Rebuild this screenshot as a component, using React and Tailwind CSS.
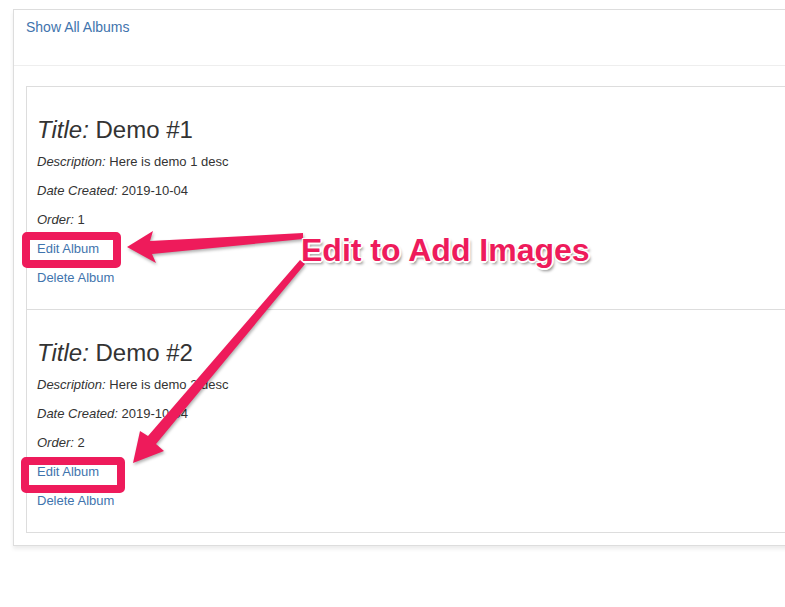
import React from "react";

const albums = [
  { id: 1, title: "Demo #1", desc: "Here is demo 1 desc", date: "2019-10-04", order: 1 },
  { id: 2, title: "Demo #2", desc: "Here is demo 2 desc", date: "2019-10-04", order: 2 },
];

const AlbumItem = ({ album, last }) => {
  return (
    <div
      className={`px-[10px] pt-[26px] pb-[17px] ${last ? "" : "border-b border-[#dddddd]"}`}
    >
      <h3 className="text-[24px] leading-[34px] text-[#333333]">
        <em>Title:</em> {album.title}
      </h3>
      <p className="text-[13px] leading-[29px] text-[#333333]">
        <em>Description:</em> {album.desc}
      </p>
      <p className="text-[13px] leading-[29px] text-[#333333]">
        <em>Date Created:</em> {album.date}
      </p>
      <p className="text-[13px] leading-[29px] text-[#333333]">
        <em>Order:</em> {album.order}
      </p>
      <div className="text-[13px] leading-[29px] text-[#3f74ad]">
        <a href="#">Edit Album</a>
      </div>
      <div className="text-[13px] leading-[29px] text-[#3f74ad]">
        <a href="#">Delete Album</a>
      </div>
    </div>
  );
};

const App = () => {
  return (
    <div
      className="relative w-full h-[607px] overflow-hidden bg-white"
      style={{ fontFamily: '"Liberation Sans", Arial, sans-serif' }}
    >
      {/* Panel */}
      <div className="ml-[13px] mt-[9px] w-[820px] border border-[#dddddd] bg-white shadow-[0_3px_4px_rgba(0,0,0,0.08)]">
        {/* Header */}
        <div className="h-[56px] px-[12px] pt-[5px] border-b border-[#eeeeee]">
          <a href="#" className="text-[14px] leading-[20px] text-[#3f74ad]">
            Show All Albums
          </a>
        </div>

        {/* Body */}
        <div className="px-[12px] pt-[20px] pb-[12px]">
          <div className="border border-[#dddddd]">
            {albums.map((album, i) => (
              <AlbumItem key={album.id} album={album} last={i === albums.length - 1} />
            ))}
          </div>
        </div>
      </div>

      {/* Annotation boxes */}
      <div className="absolute left-[22px] top-[232px] w-[99px] h-[36px] border-[8px] border-[#ee1b5b] rounded-[5px]" />
      <div className="absolute left-[21px] top-[457px] w-[104px] h-[36px] border-[8px] border-[#ee1b5b] rounded-[5px]" />

      {/* Arrows */}
      <svg
        className="absolute left-0 top-0 drop-shadow-[1px_2px_1.5px_rgba(0,0,0,0.3)]"
        width="785"
        height="607"
        viewBox="0 0 785 607"
      >
        <polygon
          points="127,247 153,231 150,241 303,233 303,239 152,254 156,263"
          fill="#ee1b5b"
        />
        <polygon
          points="133,463 140,431 148,436 300,260 305,264 156,444 164,451"
          fill="#ee1b5b"
        />
      </svg>

      {/* Annotation label */}
      <div
        className="absolute left-[301px] top-[234px] text-[32px] leading-[32px] font-bold text-[#ee1b5b] whitespace-nowrap [text-shadow:1px_1px_0_#fff,-1px_-1px_0_#fff,1px_-1px_0_#fff,-1px_1px_0_#fff,0_2px_0_#fff,2px_0_0_#fff,2px_3px_3px_rgba(0,0,0,0.45)]"
      >
        Edit to Add Images
      </div>
    </div>
  );
};

export default App;
